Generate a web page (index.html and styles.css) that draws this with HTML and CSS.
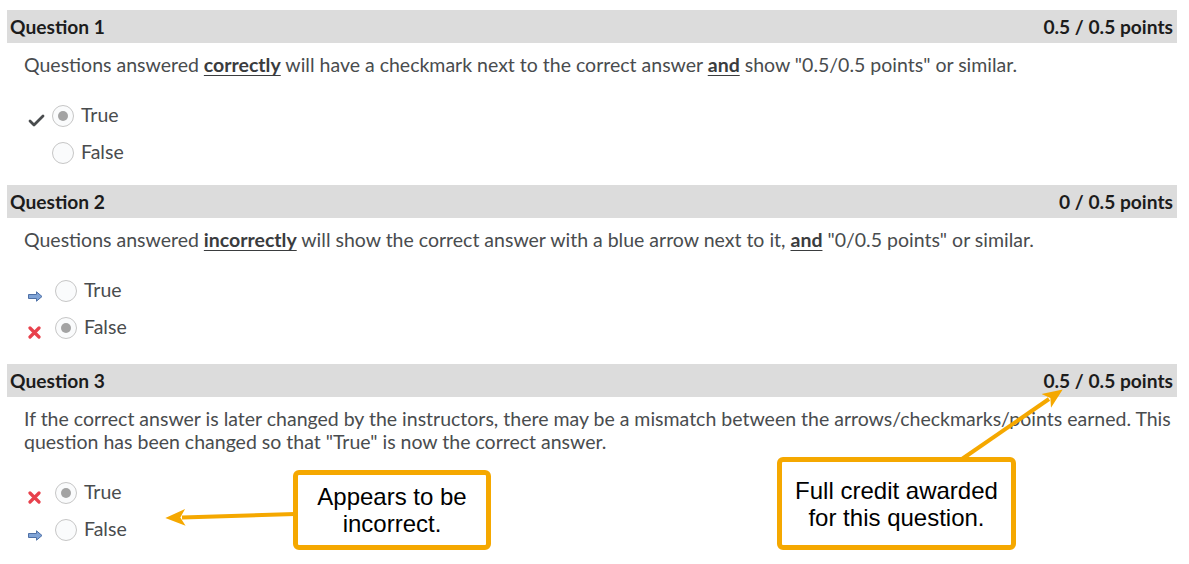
FILE: index.html
```html
<!DOCTYPE html>
<html lang="en">
<head>
<meta charset="utf-8">
<title>Quiz review</title>
<link rel="stylesheet" href="styles.css">
</head>
<body>
<div class="page">
  <section class="question">
    <div class="q-head"><span>Question 1</span><span>0.5 / 0.5 points</span></div>
    <div class="q-body">
      <p class="q-text">Questions answered <u class="em">correctly</u> will have a checkmark next to the correct answer <u class="em">and</u> show "0.5/0.5 points" or similar.</p>
      <div class="options">
        <div class="opt">
          <span class="mark low">
            <svg width="17" height="14" viewBox="0 0 17 14"><path d="M2 8 L6 12 L15 3" fill="none" stroke="#494c4e" stroke-width="2.8" stroke-linecap="round" stroke-linejoin="round"/></svg>
          </span>
          <span class="radio checked"></span><span class="label">True</span>
        </div>
        <div class="opt">
          <span class="mark"></span>
          <span class="radio"></span><span class="label">False</span>
        </div>
      </div>
    </div>
  </section>

  <section class="question tall">
    <div class="q-head"><span>Question 2</span><span>0 / 0.5 points</span></div>
    <div class="q-body">
      <p class="q-text">Questions answered <u class="em">incorrectly</u> will show the correct answer with a blue arrow next to it, <u class="em">and</u> "0/0.5 points" or similar.</p>
      <div class="options wide">
        <div class="opt">
          <span class="mark low">
            <svg width="15" height="11" viewBox="0 0 15 11"><path d="M0.5 3.5 H8.5 V0.8 L14 5.5 L8.5 10.2 V7.5 H0.5 Z" fill="#7fa3d6" stroke="#4e70a6" stroke-width="1"/></svg>
          </span>
          <span class="radio"></span><span class="label">True</span>
        </div>
        <div class="opt">
          <span class="mark low">
            <svg width="13" height="13" viewBox="0 0 13 13"><path d="M2 2 L11 11 M11 2 L2 11" stroke="#e8414c" stroke-width="3.2" stroke-linecap="round"/></svg>
          </span>
          <span class="radio checked"></span><span class="label">False</span>
        </div>
      </div>
    </div>
  </section>

  <section class="question">
    <div class="q-head"><span>Question 3</span><span>0.5 / 0.5 points</span></div>
    <div class="q-body">
      <p class="q-text">If the correct answer is later changed by the instructors, there may be a mismatch between the arrows/checkmarks/points earned. This question has been changed so that "True" is now the correct answer.</p>
      <div class="options wide">
        <div class="opt">
          <span class="mark low">
            <svg width="13" height="13" viewBox="0 0 13 13"><path d="M2 2 L11 11 M11 2 L2 11" stroke="#e8414c" stroke-width="3.2" stroke-linecap="round"/></svg>
          </span>
          <span class="radio checked"></span><span class="label">True</span>
        </div>
        <div class="opt">
          <span class="mark low">
            <svg width="15" height="11" viewBox="0 0 15 11"><path d="M0.5 3.5 H8.5 V0.8 L14 5.5 L8.5 10.2 V7.5 H0.5 Z" fill="#7fa3d6" stroke="#4e70a6" stroke-width="1"/></svg>
          </span>
          <span class="radio"></span><span class="label">False</span>
        </div>
      </div>
    </div>
  </section>

  <svg class="arrows" width="1189" height="564" viewBox="0 0 1189 564">
    <defs>
      <marker id="head" viewBox="0 0 12 10" refX="2" refY="5" markerWidth="5" markerHeight="5" orient="auto" markerUnits="strokeWidth">
        <path d="M12 5 L0 0 L3 5 L0 10 Z" fill="#f5a800"/>
      </marker>
    </defs>
    <line x1="295" y1="514" x2="182" y2="517.5" stroke="#f5a800" stroke-width="4" marker-end="url(#head)"/>
    <line x1="962" y1="459" x2="1049" y2="399" stroke="#f5a800" stroke-width="4" marker-end="url(#head)"/>
  </svg>

  <div class="callout c1">Appears to be<br>incorrect.</div>
  <div class="callout c2">Full credit awarded<br>for this question.</div>
</div>
</body>
</html>
```
FILE: styles.css
```css
html, body {
  margin: 0;
  padding: 0;
  background: #ffffff;
}
.page {
  position: relative;
  width: 1189px;
  height: 564px;
  padding: 10px 0 0 7px;
  box-sizing: border-box;
  font-family: Lato, "Noto Sans", sans-serif;
  overflow: hidden;
}
.question {
  width: 1170px;
  padding-bottom: 14px;
}
.question.tall {
  padding-bottom: 18px;
}
.q-head {
  height: 33px;
  background: #dcdcdc;
  display: flex;
  justify-content: space-between;
  align-items: center;
  padding: 0 4px 0 3px;
  font-weight: 700;
  font-size: 19.2px;
  color: #1c1c1c;
}
.q-body {
  padding: 10px 0 0 17px;
}
.q-text {
  margin: 0;
  font-size: 19.5px;
  line-height: 23px;
  color: #494c4e;
}
.em {
  font-weight: 700;
  color: #3a3c3e;
  text-decoration-thickness: 1px;
  text-underline-offset: 3px;
}
.options {
  margin-top: 21px;
  padding-left: 4px;
}
.opt {
  height: 37px;
  display: flex;
  align-items: center;
  color: #494c4e;
  font-size: 19.5px;
}
.mark {
  width: 24px;
  height: 22px;
  display: flex;
  align-items: center;
  justify-content: flex-start;
  flex-shrink: 0;
}
.mark svg {
  display: block;
}
.mark.low {
  align-items: flex-end;
  padding-top: 6px;
  box-sizing: border-box;
}
.options.wide .mark {
  width: 27px;
}
.radio {
  width: 22px;
  height: 22px;
  box-sizing: border-box;
  border: 1px solid #c6c6c6;
  border-radius: 50%;
  background: #fafbfc;
  display: flex;
  align-items: center;
  justify-content: center;
  flex-shrink: 0;
}
.radio.checked::after {
  content: "";
  width: 10px;
  height: 10px;
  border-radius: 50%;
  background: #a3a3a3;
}
.label {
  margin-left: 7px;
  position: relative;
  top: -1px;
}
.arrows {
  position: absolute;
  left: 0;
  top: 0;
  pointer-events: none;
}
.callout {
  position: absolute;
  box-sizing: border-box;
  border: 5px solid #f5a800;
  border-radius: 6px;
  background: #ffffff;
  font-family: "Liberation Sans", Arial, sans-serif;
  font-size: 24px;
  line-height: 27px;
  color: #000000;
  text-align: center;
  display: flex;
  align-items: center;
  justify-content: center;
}
.c1 {
  left: 293px;
  top: 470px;
  width: 198px;
  height: 80px;
}
.c2 {
  left: 777px;
  top: 457px;
  width: 239px;
  height: 93px;
}
```
